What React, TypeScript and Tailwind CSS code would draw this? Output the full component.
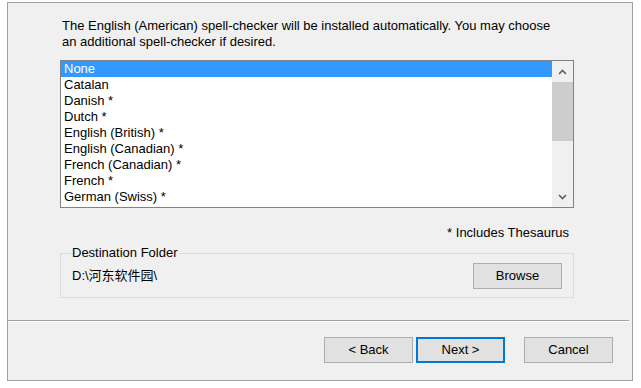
import React from 'react';

const languages = [
  'None',
  'Catalan',
  'Danish *',
  'Dutch *',
  'English (British) *',
  'English (Canadian) *',
  'French (Canadian) *',
  'French *',
  'German (Swiss) *',
];

function Chevron({ up }: { up?: boolean }) {
  return (
    <svg width="9" height="6" viewBox="0 0 9 6" className="block">
      <path
        d={up ? 'M1 5 L4.5 1.5 L8 5' : 'M1 1 L4.5 4.5 L8 1'}
        fill="none"
        stroke="#606060"
        strokeWidth="1.6"
      />
    </svg>
  );
}

function WinButton({ label, focused }: { label: string; focused?: boolean }) {
  return (
    <button
      type="button"
      className={`flex h-[26px] w-[89px] items-center justify-center bg-[#e1e1e1] text-[13px] leading-[16px] text-black ${
        focused ? 'border-2 border-[#0078d7]' : 'border border-[#adadad]'
      }`}
    >
      {label}
    </button>
  );
}

export default function App() {
  return (
    <div className="h-[388px] w-[641px] overflow-hidden bg-white font-['Liberation_Sans','Noto_Sans_CJK_SC',sans-serif] text-[13px] leading-[16px] text-black">
      <div className="ml-[7px] mt-[2px] flex h-[379px] w-[626px] flex-col border border-[#a0a0a0] bg-[#f0f0f0]">
        <div className="pl-[52px]">
          <p className="ml-[2px] whitespace-nowrap pt-[15px]">
            The English (American) spell-checker will be installed automatically. You may choose
            <br />
            an additional spell-checker if desired.
          </p>

          <div className="mt-[10px] flex h-[148px] w-[514px] border border-[#828282] bg-white">
            <ul className="flex-1 overflow-hidden">
              {languages.map((lang, i) => (
                <li
                  key={lang}
                  className={`h-[16px] whitespace-nowrap pl-[3px] leading-[16px] ${
                    i === 0 ? 'bg-[#3399ff] text-white' : ''
                  }`}
                >
                  {lang}
                </li>
              ))}
            </ul>
            <div className="flex w-[21px] flex-col bg-[#f0f0f0]">
              <div className="flex h-[21px] items-center justify-center">
                <Chevron up />
              </div>
              <div className="h-[59px] bg-[#cdcdcd]" />
              <div className="flex-1" />
              <div className="flex h-[21px] items-center justify-center">
                <Chevron />
              </div>
            </div>
          </div>

          <div className="mt-[17px] w-[514px] pr-[5px] text-right">* Includes Thesaurus</div>

          <fieldset className="mt-[4px] w-[514px] border border-[#dcdcdc] pb-[8px] pl-[10px] pr-[11px]">
            <legend className="px-[1px] leading-[16px]">Destination Folder</legend>
            <div className="flex items-center justify-between pt-[2px]">
              <span className="pl-[1px]">D:\河东软件园\</span>
              <WinButton label="Browse" />
            </div>
          </fieldset>
        </div>

        <div className="mr-[3px] mt-[22px] h-[2px] border-b border-t border-b-white border-t-[#a0a0a0]" />

        <div className="mt-[15px] flex justify-end pr-[19px]">
          <WinButton label="< Back" />
          <div className="ml-[3px]">
            <WinButton label="Next >" focused />
          </div>
          <div className="ml-[19px]">
            <WinButton label="Cancel" />
          </div>
        </div>
      </div>
    </div>
  );
}
